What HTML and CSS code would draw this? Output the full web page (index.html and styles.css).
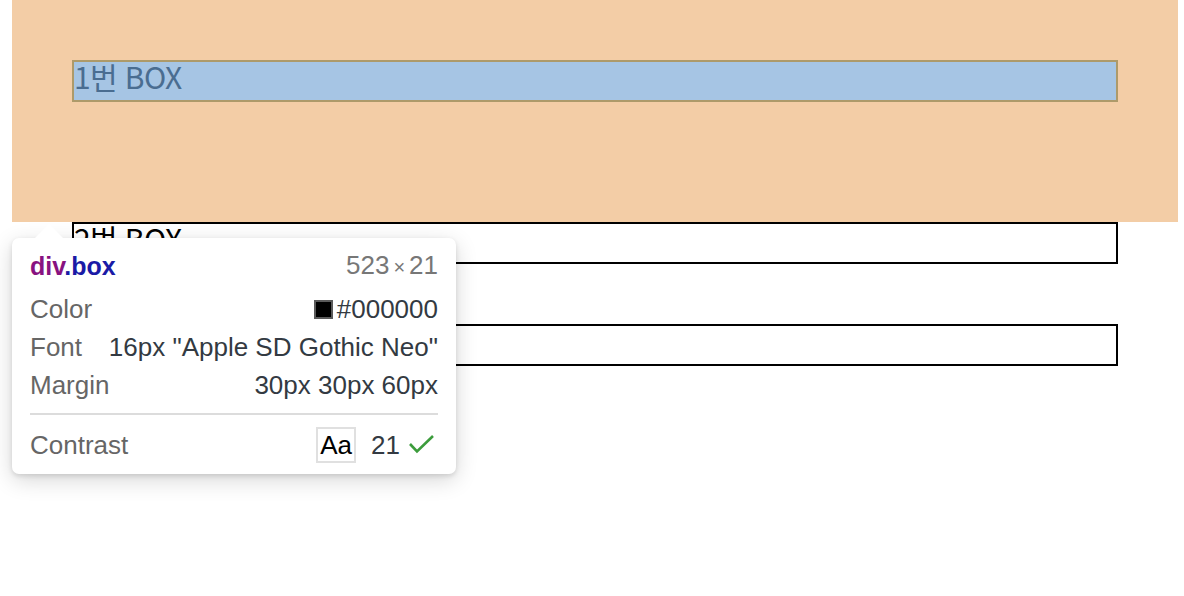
FILE: index.html
```html
<!DOCTYPE html>
<html lang="ko">
<head>
<meta charset="utf-8">
<title>Box</title>
<link rel="stylesheet" href="styles.css">
</head>
<body>
<div class="page">
  <div class="margin-hl">
    <div class="box box-hl">1번 BOX</div>
  </div>
  <div class="box">2번 BOX</div>
  <div class="box"></div>

  <div class="tip">
    <div class="tip-arrow"></div>
    <div class="tip-row tip-head">
      <span class="tag"><span class="tag-el">div</span><span class="tag-cls">.box</span></span>
      <span class="dim">523<span class="times">×</span>21</span>
    </div>
    <div class="tip-row">
      <span class="lbl">Color</span>
      <span class="val"><span class="swatch"></span>#000000</span>
    </div>
    <div class="tip-row">
      <span class="lbl">Font</span>
      <span class="val">16px "Apple SD Gothic Neo"</span>
    </div>
    <div class="tip-row">
      <span class="lbl">Margin</span>
      <span class="val">30px 30px 60px</span>
    </div>
    <div class="tip-sep"></div>
    <div class="tip-row tip-contrast">
      <span class="lbl">Contrast</span>
      <span class="val contrast">
        <span class="aa">Aa</span>
        <span class="ratio">21</span>
        <svg class="check" width="26" height="20" viewBox="0 0 26 20"><path d="M1 9 L8 16.5 L24 1" fill="none" stroke="#3c9c3c" stroke-width="2.6"/></svg>
      </span>
    </div>
  </div>
</div>
</body>
</html>
```

FILE: styles.css
```css
html, body {
  margin: 0;
  padding: 0;
  background: #ffffff;
}

.page {
  position: relative;
  margin: 0 6px 0 12px;
  height: 596px;
}

.margin-hl {
  background: #f3cda6;
  padding: 60px 60px 120px 60px;
}

.box {
  box-sizing: border-box;
  height: 42px;
  border: 2px solid #000;
  margin: 0 60px 60px 60px;
  font-family: "Noto Sans CJK KR", "Noto Sans", sans-serif;
  font-size: 30px;
  letter-spacing: -0.6px;
  line-height: 28px;
  color: #000;
  overflow: visible;
}

.box-hl {
  margin: 0;
  background: #a6c5e4;
  border-color: #ad9a6a;
  color: #4a6d91;
}

.tip {
  position: absolute;
  left: 0;
  top: 238px;
  width: 444px;
  box-sizing: border-box;
  padding: 9px 18px 10px 18px;
  background: #fff;
  border-radius: 7px;
  box-shadow: 0 2px 5px rgba(0,0,0,0.12), 0 6px 22px rgba(0,0,0,0.16);
  font-family: "Liberation Sans", Arial, sans-serif;
  font-size: 26px;
  color: #333a42;
}

.tip-arrow {
  position: absolute;
  left: 23px;
  top: -14px;
  width: 28px;
  height: 14px;
  background: #fff;
  clip-path: polygon(50% 0, 100% 100%, 0 100%);
}

.tip-row {
  display: flex;
  justify-content: space-between;
  align-items: center;
  height: 38px;
  line-height: 38px;
  white-space: nowrap;
}

.tip-head {
  margin-bottom: 5px;
}

.tag {
  font-weight: bold;
  font-size: 25px;
}

.tag-el {
  color: #881280;
}

.tag-cls {
  color: #1a1aa6;
}

.dim {
  color: #777;
}

.times {
  font-size: 20px;
  margin: 0 4px;
}

.lbl {
  color: #666;
}

.val {
  display: flex;
  align-items: center;
}

.swatch {
  display: inline-block;
  width: 15px;
  height: 15px;
  background: #000;
  border: 2px solid #5a5a5a;
  margin-right: 4px;
}

.tip-sep {
  height: 2px;
  background: #dcdcdc;
  margin: 9px 0 11px 0;
}

.aa {
  box-sizing: border-box;
  width: 40px;
  height: 36px;
  line-height: 32px;
  border: 2px solid #e0e0e0;
  text-align: center;
  color: #000;
  font-size: 26px;
}

.ratio {
  margin-left: 15px;
  margin-right: 9px;
}

.check {
  display: block;
  margin-right: 3px;
}
```
